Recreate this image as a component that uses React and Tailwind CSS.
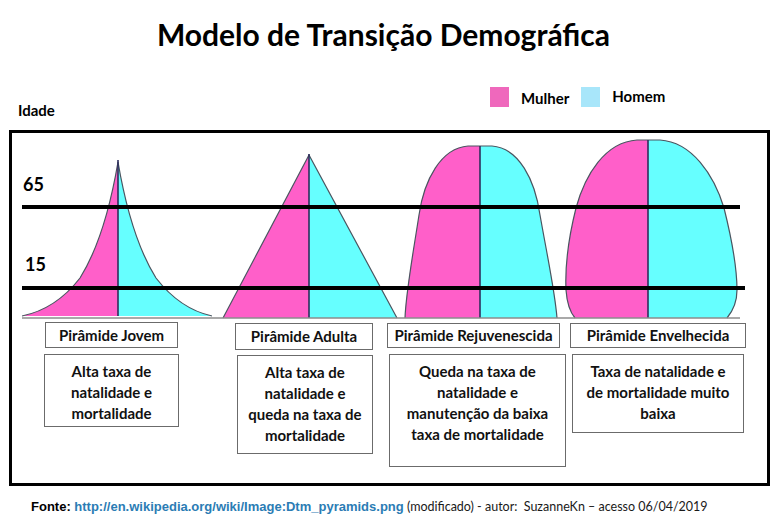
import React from "react";

const PINK = "#ff5fc9";
const CYAN = "#66ffff";
const EDGE = "#4a5560";
const MID = "#2e2f5c";

// chart is drawn in page coordinates (viewBox starts at the box's inner corner)
function Chart() {
  return (
    <svg width="755" height="187" viewBox="12 133 755 187" className="block">
      {/* jovem */}
      <path d="M118,162 Q105,238 80,278 Q56,309 22,316 L118,316 Z" fill={PINK} />
      <path d="M118,162 Q131,238 156,278 Q180,309 212,316 L118,316 Z" fill={CYAN} />
      <path
        d="M22,316 Q56,309 80,278 Q105,238 118,162 Q131,238 156,278 Q180,309 212,316"
        fill="none"
        stroke={EDGE}
        strokeWidth="1.2"
      />
      <path d="M118,160 L118,316" stroke={MID} strokeWidth="1.6" />

      {/* adulta */}
      <path d="M309,155 L223,318 L309,318 Z" fill={PINK} />
      <path d="M309,155 L397,318 L309,318 Z" fill={CYAN} />
      <path d="M223,318 L309,155 L397,318" fill="none" stroke={EDGE} strokeWidth="1.2" />
      <path d="M309,154 L309,318" stroke={MID} strokeWidth="1.6" />

      {/* rejuvenescida */}
      <path
        d="M480,146 L468,146 C441,148 424,180 419,215 C412,260 406,292 405,318 L480,318 Z"
        fill={PINK}
      />
      <path
        d="M480,146 L492,146 C519,148 535,180 540,215 C548,260 555,292 557,318 L480,318 Z"
        fill={CYAN}
      />
      <path
        d="M405,318 C406,292 412,260 419,215 C424,180 441,148 468,146 L492,146 C519,148 535,180 540,215 C548,260 555,292 557,318"
        fill="none"
        stroke={EDGE}
        strokeWidth="1.2"
      />
      <path d="M480,146 L480,318" stroke={MID} strokeWidth="1.6" />

      {/* envelhecida */}
      <path
        d="M648,140 L637,140 C605,142 585,175 576,208 C568,240 565,268 566,290 C567,304 570,312 575,318 L648,318 Z"
        fill={PINK}
      />
      <path
        d="M648,140 L660,140 C692,142 714,175 724,208 C732,240 737,268 737,290 C737,304 732,312 727,318 L648,318 Z"
        fill={CYAN}
      />
      <path
        d="M575,318 C570,312 567,304 566,290 C565,268 568,240 576,208 C585,175 605,142 637,140 L660,140 C692,142 714,175 724,208 C732,240 737,268 737,290 C737,304 732,312 727,318"
        fill="none"
        stroke={EDGE}
        strokeWidth="1.2"
      />
      <path d="M648,140 L648,318" stroke={MID} strokeWidth="1.6" />

      {/* base */}
      <path d="M22,318 L740,318" stroke="#8c8c8c" strokeWidth="1.5" />

      {/* age lines */}
      <path d="M22,207 L740,207" stroke="#000" strokeWidth="4.2" />
      <path d="M22,288 L745,288" stroke="#000" strokeWidth="4.2" />

      <text
        x="23"
        y="191"
        fontFamily="Lato, 'Noto Sans', sans-serif"
        fontWeight="700"
        fontSize="18"
        fill="#000"
      >
        65
      </text>
      <text
        x="25"
        y="271"
        fontFamily="Lato, 'Noto Sans', sans-serif"
        fontWeight="700"
        fontSize="18"
        fill="#000"
      >
        15
      </text>
    </svg>
  );
}

function Label({ className, children }) {
  return (
    <div
      className={
        "flex items-center justify-center border border-[#6b6b6b] text-[15px] font-bold text-[#111] whitespace-nowrap " +
        className
      }
    >
      {children}
    </div>
  );
}

function Desc({ className, lines }) {
  return (
    <div
      className={
        "border border-[#6b6b6b] pt-[6px] text-center text-[15px] leading-[21px] font-bold text-[#111] " +
        className
      }
    >
      {lines.map((l, i) => (
        <div key={i} className="whitespace-nowrap">
          {l}
        </div>
      ))}
    </div>
  );
}

export default function App() {
  return (
    <div className="w-[775px] h-[519px] bg-white overflow-hidden font-['Lato','Noto_Sans',sans-serif] text-black">
      <h1 className="pt-[19px] pr-[8px] text-center text-[30px] leading-[30px] font-bold">
        Modelo de Transição Demográfica
      </h1>

      <div className="flex h-[81px] items-start">
        <div className="w-[490px] pl-[18px] pt-[53px] text-[15px] leading-[16px] font-bold">
          Idade
        </div>
        <div className="flex items-start pt-[38px]">
          <div className="w-[19px] h-[20px] bg-[#ef68bc]" />
          <span className="ml-[12px] mt-[3px] text-[15px] leading-[16px] font-bold">Mulher</span>
          <div className="ml-[12px] w-[19px] h-[20px] bg-[#a8e6fa]" />
          <span className="ml-[12px] mt-[1px] text-[15px] leading-[16px] font-bold">Homem</span>
        </div>
      </div>

      <div className="ml-[9px] w-[761px] h-[356px] border-[3px] border-black">
        <Chart />
        <div className="flex items-start">
          <div className="ml-[32px] w-[135px]">
            <Label className="ml-[1px] mt-[2px] w-[133px] h-[26px]">Pirâmide Jovem</Label>
            <Desc
              className="mt-[6px] w-[135px] h-[73px]"
              lines={["Alta taxa de", "natalidade e", "mortalidade"]}
            />
          </div>
          <div className="ml-[56px] w-[138px]">
            <Label className="mt-[3px] w-[138px] h-[27px]">Pirâmide Adulta</Label>
            <Desc
              className="ml-[2px] mt-[5px] w-[136px] h-[99px]"
              lines={["Alta taxa de", "natalidade e", "queda na taxa de", "mortalidade"]}
            />
          </div>
          <div className="ml-[14px] w-[179px]">
            <Label className="mt-[3px] w-[173px] h-[25px]">Pirâmide Rejuvenescida</Label>
            <Desc
              className="ml-[2px] mt-[6px] w-[177px] h-[113px]"
              lines={[
                "Queda na taxa de",
                "natalidade e",
                "manutenção da baixa",
                "taxa de mortalidade",
              ]}
            />
          </div>
          <div className="ml-[4px] w-[176px]">
            <Label className="mt-[3px] w-[176px] h-[25px]">Pirâmide Envelhecida</Label>
            <Desc
              className="ml-[2px] mt-[6px] w-[172px] h-[79px]"
              lines={["Taxa de natalidade e", "de mortalidade muito", "baixa"]}
            />
          </div>
        </div>
      </div>

      <div className="mt-[13px] pl-[31px] text-[13px] leading-[14px] whitespace-nowrap">
        <span className="font-['Liberation_Sans',Arial,sans-serif] font-bold text-black">Fonte: </span>
        <span className="font-['Liberation_Sans',Arial,sans-serif] font-bold text-[#2b7cb4]">
          http://en.wikipedia.org/wiki/Image:Dtm_pyramids.png
        </span>
        <span className="text-[12.5px] text-[#1a1a1a]"> (modificado) - autor:&nbsp; SuzanneKn – acesso 06/04/2019</span>
      </div>
    </div>
  );
}
